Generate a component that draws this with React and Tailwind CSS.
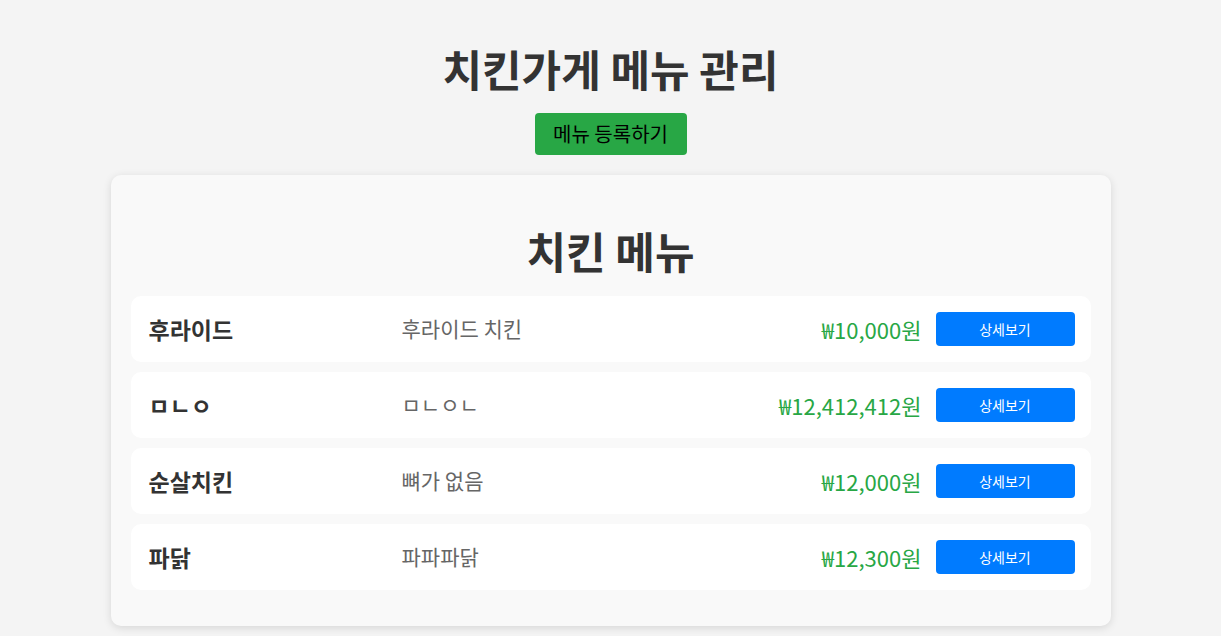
import React from "react";

const menus = [
  { name: "후라이드", desc: "후라이드 치킨", price: 10000 },
  { name: "ㅁㄴㅇ", desc: "ㅁㄴㅇㄴ", price: 12412412 },
  { name: "순살치킨", desc: "뼈가 없음", price: 12000 },
  { name: "파닭", desc: "파파파닭", price: 12300 },
];

const font = { fontFamily: '"Noto Sans CJK KR", "Noto Sans", sans-serif' };

export default function App() {
  return (
    <div className="min-h-[636px] bg-[#f4f4f4] text-[#333] flex flex-col items-center pt-[44px]" style={font}>
      <h1 className="text-[43px] font-bold leading-[48px]">치킨가게 메뉴 관리</h1>
      <button className="mt-[21px] h-[42px] w-[152px] rounded-[4px] bg-[#28a745] text-[20px] text-black">
        메뉴 등록하기
      </button>

      <div className="mt-[20px] w-[1000px] rounded-[10px] bg-[#f9f9f9] px-[20px] pt-[51px] pb-[36px] shadow-[0_2px_8px_rgba(0,0,0,0.12)]">
        <h2 className="text-center text-[43px] font-bold leading-[48px]">치킨 메뉴</h2>
        <div className="mt-[22px] flex flex-col gap-[10px]">
          {menus.map((m) => (
            <MenuRow key={m.name} {...m} />
          ))}
        </div>
      </div>
    </div>
  );
}

function MenuRow({ name, desc, price }) {
  return (
    <div className="flex h-[66px] items-center rounded-[10px] bg-white pl-[18px] pr-[16px]">
      <span className="w-[253px] text-[23px] font-bold">{name}</span>
      <span className="flex-1 text-[21px] text-[#666]">{desc}</span>
      <span className="text-[22px] text-[#28a745]">₩{price.toLocaleString("ko-KR")}원</span>
      <button className="ml-[14px] h-[34px] w-[139px] rounded-[4px] bg-[#007bff] text-[14px] text-white">
        상세보기
      </button>
    </div>
  );
}
